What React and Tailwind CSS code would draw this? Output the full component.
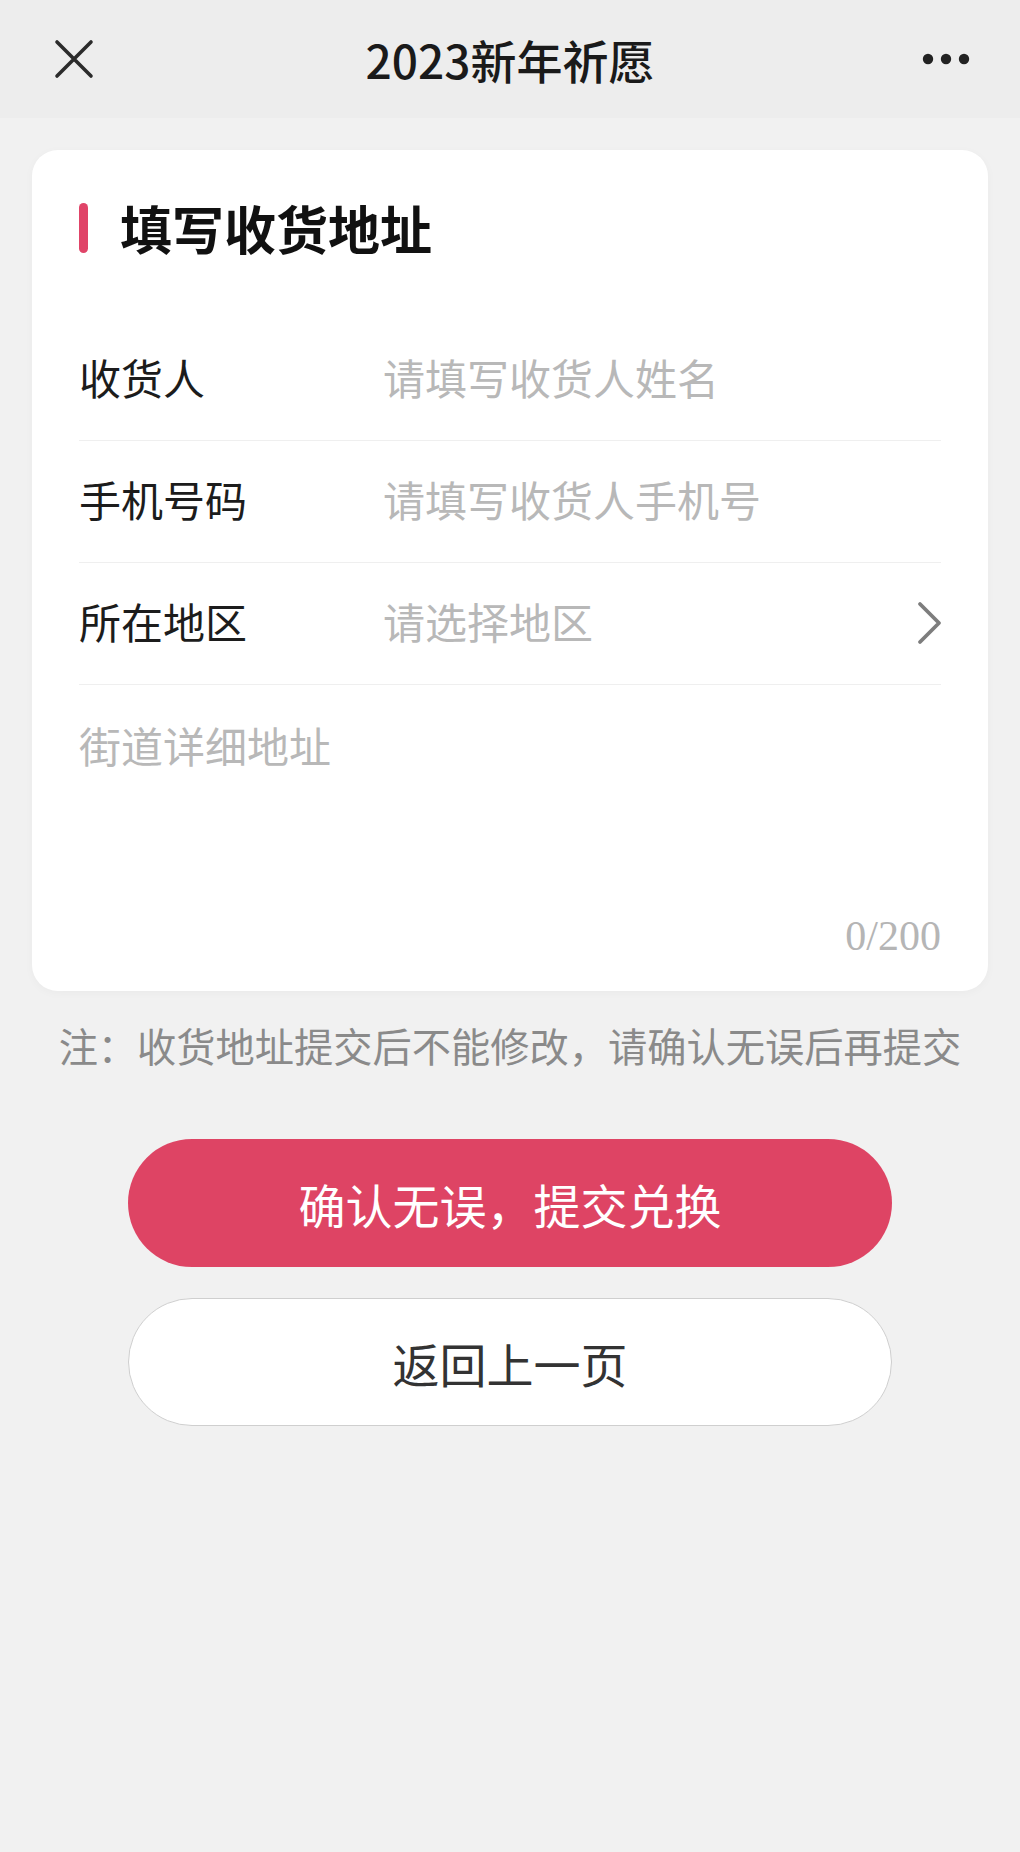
import React from "react";

const font = { fontFamily: '"Noto Sans CJK SC", "Noto Sans", sans-serif' };

function CloseIcon() {
  return (
    <svg width="40" height="40" viewBox="0 0 40 40" fill="none">
      <path d="M3 3L37 37M37 3L3 37" stroke="#2b2b2b" strokeWidth="3.6" strokeLinecap="round" />
    </svg>
  );
}

function MoreIcon() {
  return (
    <svg width="48" height="12" viewBox="0 0 48 12">
      <circle cx="6" cy="6" r="5.2" fill="#222" />
      <circle cx="24" cy="6" r="5.2" fill="#222" />
      <circle cx="42" cy="6" r="5.2" fill="#222" />
    </svg>
  );
}

function Chevron() {
  return (
    <svg width="26" height="44" viewBox="0 0 26 44" fill="none">
      <path d="M3 3L22 22L3 41" stroke="#7d7d7d" strokeWidth="3.8" strokeLinecap="round" strokeLinejoin="round" />
    </svg>
  );
}

const rows = [
  { label: "收货人", placeholder: "请填写收货人姓名" },
  { label: "手机号码", placeholder: "请填写收货人手机号" },
  { label: "所在地区", placeholder: "请选择地区", arrow: true },
];

export default function App() {
  return (
    <div className="min-h-[1852px] w-[1020px] bg-[#f1f1f1]" style={font}>
      {/* top bar */}
      <div className="flex h-[118px] items-center bg-[#ededed]">
        <div className="flex w-[160px] items-center pl-[54px]">
          <CloseIcon />
        </div>
        <div className="flex-1 text-center text-[46px] font-medium leading-none text-[#1a1a1a]">
          2023新年祈愿
        </div>
        <div className="flex w-[160px] items-center justify-end pr-[50px]">
          <MoreIcon />
        </div>
      </div>

      {/* address card */}
      <div className="mx-[32px] mt-[32px] rounded-[26px] bg-white px-[47px] pt-[50px] shadow-[0_2px_10px_rgba(0,0,0,0.03)]">
        <div className="flex h-[56px] items-center">
          <span className="h-[50px] w-[9px] rounded-full bg-[#e04468]" />
          <span className="ml-[32px] text-[52px] font-bold leading-none text-[#111]">填写收货地址</span>
        </div>

        <div className="mt-[63px]">
          {rows.map((r) => (
            <div key={r.label} className="flex h-[122px] items-center border-b border-[#efefef] pb-[6px]">
              <span className="w-[304px] text-[42px] leading-none text-[#1c1c1c]">{r.label}</span>
              <span className="flex-1 text-[42px] leading-none text-[#b8b8b8]">{r.placeholder}</span>
              {r.arrow && (
                <span className="mr-[-2px] flex items-center pt-[4px]">
                  <Chevron />
                </span>
              )}
            </div>
          ))}
        </div>

        <div className="flex h-[306px] flex-col justify-between pb-[25px] pt-[30px]">
          <div className="text-[42px] leading-[60px] text-[#b8b8b8]">街道详细地址</div>
          <div
            className="text-right text-[42px] leading-[60px] text-[#b5b5b5]"
            style={{ fontFamily: '"Liberation Serif", serif' }}
          >
            0/200
          </div>
        </div>
      </div>

      <p className="mt-[26px] text-center text-[39.25px] leading-[56px] text-[#8a8a8a]">
        注：收货地址提交后不能修改，请确认无误后再提交
      </p>

      <div className="mt-[66px] flex flex-col items-center gap-[31px]">
        <button className="flex h-[128px] w-[764px] items-center justify-center rounded-full bg-[#de4464] text-[47px] leading-none text-white">
          确认无误，提交兑换
        </button>
        <button className="flex h-[128px] w-[764px] items-center justify-center rounded-full border-[1.5px] border-[#cfcfcf] bg-white text-[47px] leading-none text-[#333]">
          返回上一页
        </button>
      </div>
    </div>
  );
}
